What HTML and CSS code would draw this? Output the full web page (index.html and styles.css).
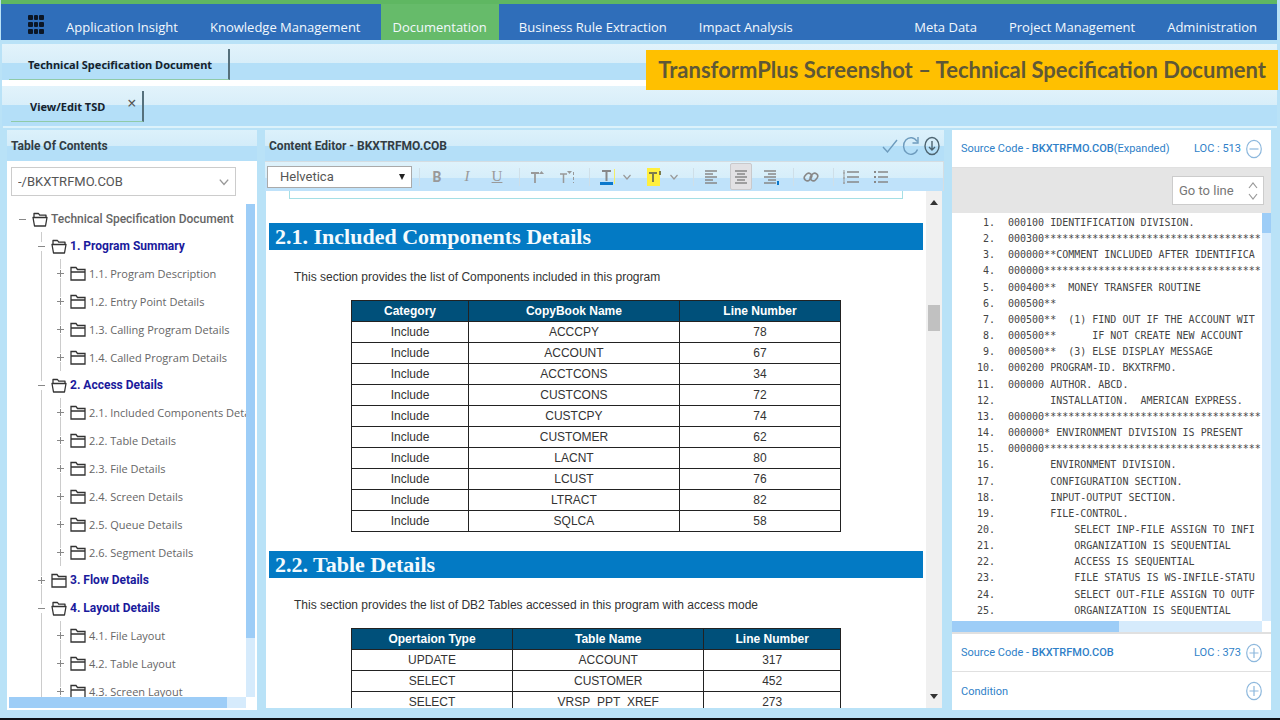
FILE: index.html
```
<!DOCTYPE html>
<html lang="en">
<head>
  <meta charset="UTF-8" />
  <meta name="viewport" content="width=device-width, initial-scale=1.0"/>
  <title>TransformPlus - Technical Specification Document</title>
  <link rel="stylesheet" href="styles.css">
</head>
<body>
  <!-- shared icons -->
  <svg class="sprite" width="0" height="0" aria-hidden="true">
    <symbol id="folder" viewBox="0 0 16 15">
      <path d="M1 14V1.500h5l1.500 2H15V14zM1 6h14" fill="none" stroke="#333" stroke-width="1.300"/>
    </symbol>
    <symbol id="folder-open" viewBox="0 0 16 15">
      <path d="M2.500 14L1 5.500h14L13.500 14zM2 5V1.500h4.500l1.200 1.700H14V5" fill="none" stroke="#333" stroke-width="1.300" stroke-linejoin="round"/>
    </symbol>
    <symbol id="chevron" viewBox="0 0 10 10">
      <path d="M1.500 3L5 7l3.500-4" fill="none" stroke="#999" stroke-width="1.200"/>
    </symbol>
    <symbol id="plus-circle" viewBox="0 0 18 20">
      <ellipse cx="9" cy="10" rx="7.300" ry="8.600" fill="none" stroke="#8db8dd" stroke-width="1.200"/>
      <path d="M4.500 10h9M9 5v10" stroke="#8db8dd" stroke-width="1.200"/>
    </symbol>
    <symbol id="minus-circle" viewBox="0 0 18 20">
      <ellipse cx="9" cy="10" rx="7.300" ry="8.600" fill="none" stroke="#8db8dd" stroke-width="1.200"/>
      <path d="M4.500 10h9" stroke="#8db8dd" stroke-width="1.200"/>
    </symbol>
  </svg>

  <nav class="navbar">
    <button class="apps" aria-label="Apps">
      <svg width="18" height="20" viewBox="0 0 18 20" fill="#0b1626">
        <rect x="1" y="0" width="5" height="5" rx="1"/><rect x="7" y="0" width="4" height="5" rx="1"/><rect x="12" y="0" width="5" height="5" rx="1"/>
        <rect x="1" y="7" width="5" height="5" rx="1"/><rect x="7" y="7" width="4" height="5" rx="1"/><rect x="12" y="7" width="5" height="5" rx="1"/>
        <rect x="1" y="14" width="5" height="5" rx="1"/><rect x="7" y="14" width="4" height="5" rx="1"/><rect x="12" y="14" width="5" height="5" rx="1"/>
      </svg>
    </button>
    <a href="#">Application Insight</a>
    <a href="#">Knowledge Management</a>
    <a href="#" class="active">Documentation</a>
    <a href="#">Business Rule Extraction</a>
    <a href="#">Impact Analysis</a>
    <span class="spacer"></span>
    <a href="#">Meta Data</a>
    <a href="#">Project Management</a>
    <a href="#">Administration</a>
  </nav>

  <div class="tabs">
    <a href="#" class="tab">Technical Specification Document</a>
  </div>
  <div class="tabs tabs-sub">
    <div class="tab"><a href="#">View/Edit TSD</a><button class="close" aria-label="Close tab">×</button></div>
  </div>

  <div class="banner">TransformPlus Screenshot – Technical Specification Document</div>

  <main class="workspace">
    <section class="panel toc">
      <h2 class="panel-head">Table Of Contents</h2>
      <div class="file-select">
        <select aria-label="Program file"><option>-/BKXTRFMO.COB</option></select>
        <svg width="12" height="12"><use href="#chevron"/></svg>
      </div>
      <div class="scroll-area toc-area">
        <ul class="tree">
          <li><div class="node root"><i class="tg minus"></i><svg><use href="#folder-open"/></svg>Technical Specification Document</div>
            <ul>
              <li><div class="node top"><i class="tg minus"></i><svg><use href="#folder-open"/></svg>1. Program Summary</div>
                <ul>
                  <li><div class="node"><i class="tg"></i><svg><use href="#folder"/></svg>1.1. Program Description</div></li>
                  <li><div class="node"><i class="tg"></i><svg><use href="#folder"/></svg>1.2. Entry Point Details</div></li>
                  <li><div class="node"><i class="tg"></i><svg><use href="#folder"/></svg>1.3. Calling Program Details</div></li>
                  <li><div class="node"><i class="tg"></i><svg><use href="#folder"/></svg>1.4. Called Program Details</div></li>
                </ul>
              </li>
              <li><div class="node top"><i class="tg minus"></i><svg><use href="#folder-open"/></svg>2. Access Details</div>
                <ul>
                  <li><div class="node"><i class="tg"></i><svg><use href="#folder"/></svg>2.1. Included Components Details</div></li>
                  <li><div class="node"><i class="tg"></i><svg><use href="#folder"/></svg>2.2. Table Details</div></li>
                  <li><div class="node"><i class="tg"></i><svg><use href="#folder"/></svg>2.3. File Details</div></li>
                  <li><div class="node"><i class="tg"></i><svg><use href="#folder"/></svg>2.4. Screen Details</div></li>
                  <li><div class="node"><i class="tg"></i><svg><use href="#folder"/></svg>2.5. Queue Details</div></li>
                  <li><div class="node"><i class="tg"></i><svg><use href="#folder"/></svg>2.6. Segment Details</div></li>
                </ul>
              </li>
              <li><div class="node top"><i class="tg"></i><svg><use href="#folder"/></svg>3. Flow Details</div></li>
              <li><div class="node top"><i class="tg minus"></i><svg><use href="#folder-open"/></svg>4. Layout Details</div>
                <ul>
                  <li><div class="node"><i class="tg"></i><svg><use href="#folder"/></svg>4.1. File Layout</div></li>
                  <li><div class="node"><i class="tg"></i><svg><use href="#folder"/></svg>4.2. Table Layout</div></li>
                  <li><div class="node"><i class="tg"></i><svg><use href="#folder"/></svg>4.3. Screen Layout</div></li>
                </ul>
              </li>
            </ul>
          </li>
        </ul>
        <div class="vbar"><div class="thumb"></div></div>
        <div class="hbar"><div class="thumb"></div></div>
      </div>
    </section>

    <section class="panel editor">
      <div class="panel-head">
        <h2>Content Editor - BKXTRFMO.COB</h2>
        <button aria-label="Save"><svg width="18" height="20" viewBox="0 0 18 20" fill="none" stroke="#6d9bbd" stroke-width="1.400"><path d="M2 11l4.500 5L16 4"/></svg></button>
        <button aria-label="Refresh"><svg width="18" height="20" viewBox="0 0 18 20" fill="none" stroke="#6d9bbd" stroke-width="1.400"><path d="M15.500 13.500A7.300 8.300 0 1 1 15 5.500M16 1v6h-5.500"/></svg></button>
        <button aria-label="Download"><svg width="18" height="20" viewBox="0 0 18 20" fill="none" stroke="#4d6470" stroke-width="1.400"><ellipse cx="9" cy="10" rx="7" ry="8.500"/><path d="M9 5v9M6 11l3 3 3-3"/></svg></button>
      </div>
      <div class="toolbar">
        <div class="font-select">
          <select aria-label="Font"><option>Helvetica</option></select>
          <svg width="8" height="8" viewBox="0 0 8 8"><path d="M1 1h6L4 7z" fill="#222"/></svg>
        </div>
        <span class="sep"></span>
        <button aria-label="Bold"><b>B</b></button>
        <button aria-label="Italic"><i>I</i></button>
        <button aria-label="Underline"><u>U</u></button>
        <span class="sep"></span>
        <button aria-label="Superscript"><svg width="16" height="16" viewBox="0 0 16 16"><path d="M2 4h8M6 4v10" stroke="#999" stroke-width="1.800"/><path d="M10 5l2.500-3L15 5z" fill="#999"/></svg></button>
        <button aria-label="Subscript"><svg width="18" height="16" viewBox="0 0 18 16"><path d="M2 5h7M5.500 5v9" stroke="#999" stroke-width="1.500"/><path d="M15.500 3v11" stroke="#999" stroke-dasharray="3 2"/><path d="M9 2h5l-2.500 3z" fill="#999"/></svg></button>
        <span class="sep"></span>
        <button aria-label="Text color"><svg width="18" height="18" viewBox="0 0 18 18"><path d="M4 3h9M8.500 3v10" stroke="#888" stroke-width="2"/><path d="M2 15.500h13" stroke="#0b78cc" stroke-width="3"/><path d="M16.500 1v15" stroke="#f3ee6a"/></svg></button>
        <button class="drop" aria-label="Text color options"><svg width="10" height="10"><use href="#chevron"/></svg></button>
        <button aria-label="Highlight"><svg width="18" height="18" viewBox="0 0 18 18"><path d="M2 0h13v18H2z" fill="#ffef3d"/><path d="M4 5h8M8 5v9M15 3v4" stroke="#7c7c4e" stroke-width="2"/></svg></button>
        <button class="drop" aria-label="Highlight options"><svg width="10" height="10"><use href="#chevron"/></svg></button>
        <span class="sep"></span>
        <button aria-label="Align left"><svg width="14" height="16" viewBox="0 0 14 16"><path d="M1 2h12M1 5h8M1 8h12M1 11h8M1 14h12" stroke="#888" stroke-width="1.500"/></svg></button>
        <button class="pressed" aria-label="Align center"><svg width="14" height="16" viewBox="0 0 14 16"><path d="M1 2h12M3 5h8M1 8h12M3 11h8M1 14h12" stroke="#888" stroke-width="1.500"/></svg></button>
        <button aria-label="Align right"><svg width="17" height="18" viewBox="0 0 17 18"><path d="M1 3h12M5 6h8M1 9h12M5 12h8M1 15h12" stroke="#888" stroke-width="1.500"/><path d="M15 13v4" stroke="#0b78cc" stroke-width="2"/></svg></button>
        <span class="sep"></span>
        <button aria-label="Link"><svg width="16" height="16" viewBox="0 0 16 16" fill="none" stroke="#888" stroke-width="1.600"><rect x="1" y="5" width="8" height="6" rx="3" transform="rotate(-50 5 8)"/><rect x="7" y="5" width="8" height="6" rx="3" transform="rotate(-50 11 8)"/></svg></button>
        <span class="sep"></span>
        <button aria-label="Numbered list"><svg width="18" height="16" viewBox="0 0 18 16"><path d="M5 3h12M5 8h12M5 13h12" stroke="#888" stroke-width="1.500"/><path d="M2 1v14M1 4h2M1 9h2M1 14h2" stroke="#999"/></svg></button>
        <button aria-label="Bullet list"><svg width="16" height="16" viewBox="0 0 16 16"><path d="M5 3h10M5 8h10M5 13h10" stroke="#888" stroke-width="1.500"/><path d="M1 3h2M1 8h2M1 13h2" stroke="#888" stroke-width="2"/></svg></button>
      </div>
      <div class="doc-wrap">
        <article class="doc">
          <div class="frame-end"></div>
          <h3>2.1. Included Components Details</h3>
          <p>This section provides the list of Components included in this program</p>
          <table>
            <colgroup><col class="w24"><col class="w43"><col class="w33"></colgroup>
            <thead><tr><th>Category</th><th>CopyBook Name</th><th>Line Number</th></tr></thead>
            <tbody>
              <tr><td>Include</td><td>ACCCPY</td><td>78</td></tr>
              <tr><td>Include</td><td>ACCOUNT</td><td>67</td></tr>
              <tr><td>Include</td><td>ACCTCONS</td><td>34</td></tr>
              <tr><td>Include</td><td>CUSTCONS</td><td>72</td></tr>
              <tr><td>Include</td><td>CUSTCPY</td><td>74</td></tr>
              <tr><td>Include</td><td>CUSTOMER</td><td>62</td></tr>
              <tr><td>Include</td><td>LACNT</td><td>80</td></tr>
              <tr><td>Include</td><td>LCUST</td><td>76</td></tr>
              <tr><td>Include</td><td>LTRACT</td><td>82</td></tr>
              <tr><td>Include</td><td>SQLCA</td><td>58</td></tr>
            </tbody>
          </table>
          <h3>2.2. Table Details</h3>
          <p>This section provides the list of DB2 Tables accessed in this program with access mode</p>
          <table>
            <colgroup><col class="w33"><col class="w39"><col class="w28"></colgroup>
            <thead><tr><th>Opertaion Type</th><th>Table Name</th><th>Line Number</th></tr></thead>
            <tbody>
              <tr><td>UPDATE</td><td>ACCOUNT</td><td>317</td></tr>
              <tr><td>SELECT</td><td>CUSTOMER</td><td>452</td></tr>
              <tr><td>SELECT</td><td>VRSP_PPT_XREF</td><td>273</td></tr>
            </tbody>
          </table>
        </article>
        <div class="doc-scroll">
          <svg width="8" height="6" viewBox="0 0 8 6"><path d="M0 6l4-5 4 5z" fill="#333"/></svg>
          <div class="thumb"></div>
          <svg width="8" height="6" viewBox="0 0 8 6"><path d="M0 0l4 5 4-5z" fill="#333"/></svg>
        </div>
      </div>
    </section>

    <section class="source">
      <div class="src-head">
        <span>Source Code - <b>BKXTRFMO.COB</b>(Expanded)</span>
        <span class="loc">LOC : 513</span>
        <button aria-label="Collapse"><svg width="18" height="20"><use href="#minus-circle"/></svg></button>
      </div>
      <div class="goto">
        <div class="goto-box">
          <input type="text" placeholder="Go to line" aria-label="Go to line">
          <svg width="10" height="18" viewBox="0 0 10 18" fill="none" stroke="#999" stroke-width="1.200"><path d="M1 6l4-5 4 5M1 12l4 5 4-5"/></svg>
        </div>
      </div>
      <div class="scroll-area code-area">
        <ol class="code">
          <li>000100 IDENTIFICATION DIVISION.</li>
          <li>000300************************************</li>
          <li>000000**COMMENT INCLUDED AFTER IDENTIFICA</li>
          <li>000000************************************</li>
          <li>000400**  MONEY TRANSFER ROUTINE</li>
          <li>000500**</li>
          <li>000500**  (1) FIND OUT IF THE ACCOUNT WIT</li>
          <li>000500**      IF NOT CREATE NEW ACCOUNT</li>
          <li>000500**  (3) ELSE DISPLAY MESSAGE</li>
          <li>000200 PROGRAM-ID. BKXTRFMO.</li>
          <li>000000 AUTHOR. ABCD.</li>
          <li>       INSTALLATION.  AMERICAN EXPRESS.</li>
          <li>000000************************************</li>
          <li>000000* ENVIRONMENT DIVISION IS PRESENT</li>
          <li>000000************************************</li>
          <li>       ENVIRONMENT DIVISION.</li>
          <li>       CONFIGURATION SECTION.</li>
          <li>       INPUT-OUTPUT SECTION.</li>
          <li>       FILE-CONTROL.</li>
          <li>           SELECT INP-FILE ASSIGN TO INFI</li>
          <li>           ORGANIZATION IS SEQUENTIAL</li>
          <li>           ACCESS IS SEQUENTIAL</li>
          <li>           FILE STATUS IS WS-INFILE-STATU</li>
          <li>           SELECT OUT-FILE ASSIGN TO OUTF</li>
          <li>           ORGANIZATION IS SEQUENTIAL</li>
        </ol>
        <div class="vbar"><div class="thumb"></div></div>
        <div class="hbar"><div class="thumb"></div></div>
      </div>
      <div class="src-head">
        <span>Source Code - <b>BKXTRFMO.COB</b></span>
        <span class="loc">LOC : 373</span>
        <button aria-label="Expand source"><svg width="18" height="20"><use href="#plus-circle"/></svg></button>
      </div>
      <div class="src-head">
        <span>Condition</span>
        <button class="loc" aria-label="Expand condition"><svg width="18" height="20"><use href="#plus-circle"/></svg></button>
      </div>
    </section>
  </main>
</body>
</html>
```
FILE: styles.css
```
* {
  box-sizing: border-box;
}
body {
  margin: 0;
  height: 100vh;
  display: flex;
  flex-direction: column;
  font-family: Roboto, "Noto Sans", sans-serif;
  font-size: 12px;
  color: #444;
  background: #b9e2f7;
  border-bottom: 2px solid #0c1116;
  overflow: hidden;
}
h2, h3, p, ul, ol {
  margin: 0;
  padding: 0;
}
ul, ol {
  list-style: none;
}
button {
  border: 0;
  padding: 0;
  background: none;
  font: inherit;
  color: inherit;
}
a {
  color: inherit;
  text-decoration: none;
}
svg {
  flex: none;
  display: block;
}
.sprite {
  position: absolute;
}

/* top navigation */
.navbar {
  flex: none;
  display: flex;
  gap: 8px;
  height: 40px;
  margin: 0 3px 0 1px;
  padding-right: 8px;
  border-top: 4px solid #5fb762;
  background: #2f6eba;
  color: #f2f8fd;
  font-family: "Open Sans", "Noto Sans", sans-serif;
  font-size: 13px;
}
.navbar a {
  padding: 14px 12px 0;
  line-height: 18px;
  white-space: nowrap;
}
.navbar .active {
  background: #66bb6a;
}
.apps {
  width: 45px;
  padding: 6px 0 0 26px;
}
.spacer {
  flex: 1;
}

/* tab rows */
.tabs {
  flex: none;
  height: 36px;
  margin: 4px 3px 0 2px;
  padding: 5px 0 0 7px;
  background: linear-gradient(#e2f3fb, #d8eef9 19px, #b4dff8 19px);
}
.tabs-sub {
  height: 46px;
  margin-top: 0;
  padding-left: 9px;
  border-top: 6px solid #fff;
}
.tab {
  display: inline-flex;
  align-items: center;
  height: 31px;
  padding: 0 16px 0 19px;
  border-right: 2px solid #55707c;
  border-bottom: 1px solid #8fcaa8;
  color: #17222b;
  font-family: "Noto Sans", sans-serif;
  font-size: 11px;
  font-weight: bold;
}
.tabs-sub .tab {
  padding-right: 6px;
}
.close {
  margin: 0 0 6px 22px;
  color: #555;
  font-size: 16px;
  font-weight: normal;
  line-height: 14px;
}
.banner {
  position: absolute;
  top: 50px;
  right: 2px;
  padding: 0 12px;
  background: #ffc000;
  color: #5f5836;
  font-family: Lato, sans-serif;
  font-size: 22px;
  font-weight: bold;
  line-height: 40px;
}

/* main area */
.workspace {
  flex: 1;
  min-height: 0;
  display: grid;
  grid-template-columns: 250px minmax(0, 1fr) 319px;
  gap: 8px;
  margin: 0 3px;
  padding: 2px 6px 8px 4px;
  border-top: 2px solid #dcf2fb;
}
.panel, .source {
  display: flex;
  flex-direction: column;
  min-width: 0;
  min-height: 0;
}
.panel-head {
  flex: none;
  display: flex;
  align-items: center;
  gap: 3px;
  height: 31px;
  padding: 0 3px 0 4px;
  background: linear-gradient(#dcf1fb, #d3ecf9 16px, #b4dff8 16px);
}
.panel h2 {
  color: #333d44;
  font-size: 12px;
}
.panel-head h2 {
  flex: 1;
}
.scroll-area {
  flex: 1;
  min-height: 0;
  display: grid;
  grid-template-columns: minmax(0, 1fr) 9px;
  grid-template-rows: minmax(0, 1fr) 11px;
  background: #fff;
}
.vbar, .hbar {
  background: #d6ebfc;
}
.thumb {
  background: #9dcdf7;
}
.hbar .thumb {
  height: 100%;
}

/* table of contents */
.toc {
  background: #fff;
}
.file-select, .font-select, .goto-box {
  display: flex;
  align-items: center;
  background: #fff;
  border: 1px solid #ccc;
}
.file-select {
  flex: none;
  height: 29px;
  margin: 6px 21px 8px 4px;
  padding-right: 5px;
}
select, input {
  flex: 1;
  min-width: 0;
  padding: 0 6px;
  border: 0;
  outline: 0;
  appearance: none;
  background: none;
  font: inherit;
  font-size: 13px;
  color: #555;
}
.font-select select {
  padding-left: 7px;
}
.toc-area {
  margin: 0 2px 2px;
}
.toc-area .vbar .thumb {
  height: 88%;
}
.toc-area .hbar .thumb {
  width: 92%;
}
.tree {
  overflow: hidden;
  padding: 1px 0 0 9px;
  color: #666;
  font-family: "Open Sans", "Noto Sans", sans-serif;
  font-size: 11px;
  white-space: nowrap;
}
.tree ul {
  margin-top: -1px;
  padding-left: 19px;
}
.tree ul li {
  background: linear-gradient(#ccc, #ccc) 4px 0 / 1px 100% no-repeat;
}
.node {
  display: flex;
  align-items: center;
  height: 28px;
}
.node svg {
  width: 16px;
  height: 15px;
  margin: 0 3px 0 5px;
}
.root, .top {
  font-family: Roboto, sans-serif;
  font-size: 12px;
}
.root {
  font-weight: 500;
}
.top {
  color: #1a1a9c;
  font-weight: bold;
}
.tg {
  flex: none;
  width: 9px;
  height: 9px;
  background:
    linear-gradient(#888, #888) 1px 4px / 7px 1px no-repeat,
    linear-gradient(#888, #888) 4px 1px / 1px 7px no-repeat,
    #fff;
}
.tg.minus {
  background: linear-gradient(#888, #888) 1px 4px / 7px 1px no-repeat, #fff;
}

/* content editor */
.toolbar {
  flex: none;
  display: flex;
  align-items: center;
  height: 30px;
  padding-left: 2px;
  border: 1px solid #d5dde2;
  border-width: 1px 1px 0 0;
  background: linear-gradient(#dff2fb, #d6eefa 16px, #bfe2fa 16px);
  color: #999;
  font-size: 14px;
}
.toolbar button {
  display: flex;
  align-items: center;
  justify-content: center;
  width: 30px;
  height: 27px;
}
.toolbar i, .toolbar u {
  font-family: "Liberation Serif", serif;
  font-size: 15px;
}
.toolbar .drop {
  width: 10px;
  margin-right: 7px;
}
.toolbar .pressed {
  width: 22px;
  margin: 0 4px;
  border: 1px solid #c9c9cc;
  border-radius: 2px;
  background: #e2e1e4;
}
.sep {
  width: 1px;
  height: 18px;
  margin: 0 2px 0 7px;
  background: #cfdfe8;
}
.font-select {
  width: 145px;
  height: 22px;
  padding: 0 5px;
  border: 1px solid #aaa;
}
.doc-wrap {
  flex: 1;
  min-height: 0;
  display: flex;
  margin: 0 2px 2px 1px;
  background: #fff;
}
.doc {
  flex: 1;
  overflow: hidden;
  padding: 0 3px;
  color: #333;
  font-family: "Liberation Sans", Arial, sans-serif;
}
.frame-end {
  height: 8px;
  margin: 0 20px 24px;
  border: 1px solid #a5dfe5;
  border-top: 0;
}
.doc h3 {
  height: 27px;
  padding-left: 6px;
  background: #037ac4;
  color: #f4fafd;
  font: bold 22px/28px "Liberation Serif", serif;
}
.doc p {
  padding: 18px 25px 14px;
  line-height: 18px;
}
.doc table {
  width: 75%;
  margin: 0 auto 19px;
  border-collapse: collapse;
  table-layout: fixed;
  line-height: 20px;
  text-align: center;
}
.doc th, .doc td {
  padding: 0;
  border: 1px solid #222;
}
.doc th {
  background: #00507a;
  color: #fff;
}
.w24 { width: 24%; }
.w28 { width: 28%; }
.w33 { width: 33%; }
.w39 { width: 39%; }
.w43 { width: 43%; }
.doc-scroll {
  display: flex;
  flex-direction: column;
  align-items: center;
  width: 16px;
  padding: 8px 0;
  background: #f0f0f0;
}
.doc-scroll .thumb {
  width: 12px;
  height: 26px;
  margin: 100px 0 auto;
  background: #c1c1c1;
}

/* source code */
.source {
  background: #fff;
}
.src-head {
  flex: none;
  display: flex;
  align-items: center;
  height: 38px;
  padding: 0 8px 0 9px;
  border-bottom: 1px solid #e0e0e0;
  color: #2f7fc8;
  font-size: 11px;
}
.src-head b {
  font-weight: 500;
}
.src-head:last-child {
  border-bottom: 0;
}
.loc {
  margin-left: auto;
}
.src-head .loc + button {
  margin-left: 4px;
}
.goto {
  flex: none;
  display: flex;
  justify-content: flex-end;
  padding: 8px 7px;
  background: #e5e5e5;
}
.goto-box {
  width: 92px;
  height: 29px;
  padding-right: 5px;
}
.goto-box input::placeholder {
  color: #777;
}
.code-area {
  border-bottom: 2px solid #e0e0e0;
}
.code-area .vbar .thumb {
  height: 5%;
}
.code-area .hbar .thumb {
  width: 54%;
}
.code {
  display: flex;
  flex-direction: column;
  justify-content: space-between;
  overflow: hidden;
  padding: 2px 0;
  counter-reset: line;
  font-family: "DejaVu Sans Mono", monospace;
  font-size: 10px;
  line-height: 16px;
  white-space: pre;
}
.code li {
  counter-increment: line;
}
.code li::before {
  content: counter(line) ".";
  display: inline-block;
  width: 43px;
  margin-right: 13px;
  text-align: right;
}
```
